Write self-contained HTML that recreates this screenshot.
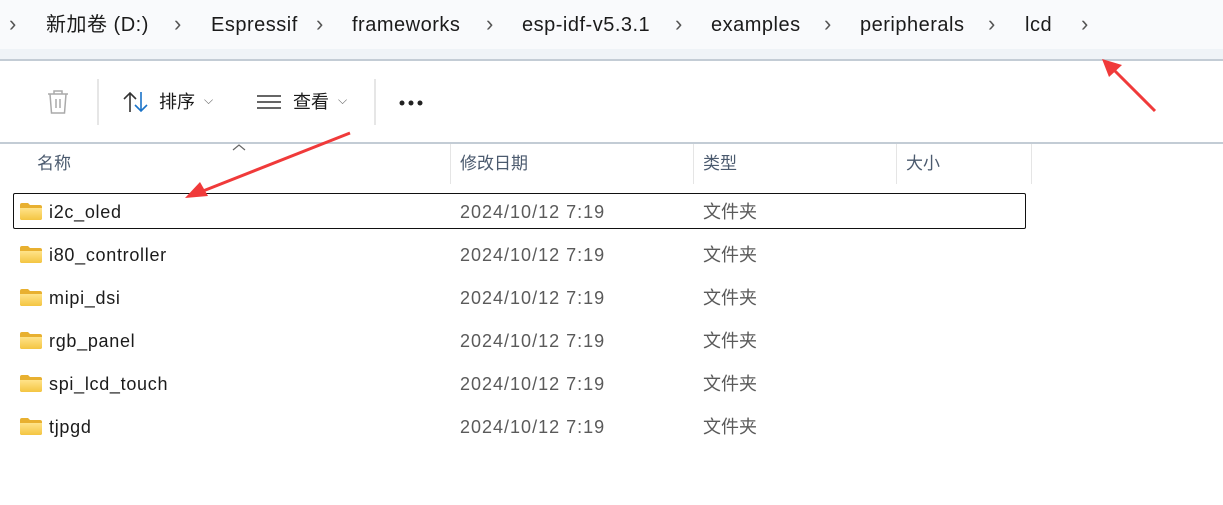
<!DOCTYPE html>
<html><head><meta charset="utf-8"><style>
*{margin:0;padding:0;box-sizing:border-box}
body{width:1223px;height:505px;background:#fff;position:relative;overflow:hidden;font-family:"Liberation Sans","Noto Sans CJK SC",sans-serif;color:#1b1b1b}
.bc{position:absolute;left:0;top:0;width:1223px;height:49px;background:#f9fafc}
.bc2{position:absolute;left:0;top:49px;width:1223px;height:11px;background:#eff3f7}
.ln{position:absolute;left:0;width:1223px;height:2px;background:#c3ccd5}
.t{position:absolute;white-space:nowrap}
.bt{font-size:20px;line-height:24px;top:13px;letter-spacing:0.5px}
.ch{font-size:22px;line-height:28px;top:10px;color:#555}
.hd{font-size:17px;line-height:20px;color:#4b5a6e;top:154px}
.row{font-size:18px;line-height:22px;letter-spacing:0.7px}
.d{color:#5a5a5a;letter-spacing:1px}
.fold{position:absolute;width:22px;height:17px}
.vs{position:absolute;top:144px;width:1px;height:40px;background:#e5e5e5}
</style></head><body>
<div class="bc"></div><div class="bc2"></div>
<div class="ln" style="top:59px"></div>
<div class="ln" style="top:142px"></div>
<span class="t ch" style="left:9px">›</span>
<span class="t bt" style="left:46px">新加卷 (D:)</span>
<span class="t ch" style="left:174px">›</span>
<span class="t bt" style="left:211px">Espressif</span>
<span class="t ch" style="left:316px">›</span>
<span class="t bt" style="left:352px">frameworks</span>
<span class="t ch" style="left:486px">›</span>
<span class="t bt" style="left:522px">esp-idf-v5.3.1</span>
<span class="t ch" style="left:675px">›</span>
<span class="t bt" style="left:711px">examples</span>
<span class="t ch" style="left:824px">›</span>
<span class="t bt" style="left:860px">peripherals</span>
<span class="t ch" style="left:988px">›</span>
<span class="t bt" style="left:1025px">lcd</span>
<span class="t ch" style="left:1081px">›</span>

<svg style="position:absolute;left:46px;top:89px" width="24" height="26" viewBox="0 0 24 26" fill="none" stroke="#aaa" stroke-width="1.5"><path d="M2 5h20M8 5V2h8v3M4 5l1.5 19h13L20 5M10 10v9M14 10v9"/></svg>
<div style="position:absolute;left:97px;top:79px;width:2px;height:46px;background:#e6e6e6"></div>
<svg style="position:absolute;left:122px;top:90px" width="28" height="24" viewBox="0 0 28 24" fill="none" stroke-width="1.6"><path d="M8 22V3M2 9l6-6 6 6" stroke="#333"/><path d="M19 2v19M13 15l6 6 6-6" stroke="#1a73c8"/></svg>
<span class="t" style="left:159px;top:91px;font-size:18px;line-height:22px">排序</span>
<span class="t" style="left:204px;top:93px;font-size:12px;color:#666">⌵</span>
<svg style="position:absolute;left:257px;top:94px" width="24" height="16" stroke="#333" stroke-width="1.5"><path d="M0 2h24M0 8h24M0 14h24"/></svg>
<span class="t" style="left:293px;top:91px;font-size:18px;line-height:22px">查看</span>
<span class="t" style="left:338px;top:93px;font-size:12px;color:#666">⌵</span>
<div style="position:absolute;left:374px;top:79px;width:2px;height:46px;background:#e6e6e6"></div>
<svg style="position:absolute;left:398px;top:99px" width="28" height="8" fill="#222"><circle cx="4" cy="4" r="2.5"/><circle cx="13" cy="4" r="2.5"/><circle cx="22" cy="4" r="2.5"/></svg>

<svg style="position:absolute;left:232px;top:143px" width="14" height="9" fill="none" stroke="#666" stroke-width="1.2"><path d="M1 7l6-5 6 5"/></svg>
<span class="t hd" style="left:37px">名称</span>
<div class="vs" style="left:450px"></div>
<span class="t hd" style="left:460px">修改日期</span>
<div class="vs" style="left:693px"></div>
<span class="t hd" style="left:703px">类型</span>
<div class="vs" style="left:896px"></div>
<span class="t hd" style="left:906px">大小</span>
<div class="vs" style="left:1031px"></div>

<div style="position:absolute;left:13px;top:193px;width:1013px;height:36px;border:1px solid #111;border-radius:2px"></div>

<svg width="0" height="0" style="position:absolute"><defs><linearGradient id="g" x1="0" y1="0" x2="0" y2="1"><stop offset="0" stop-color="#ffe38a"/><stop offset="1" stop-color="#f4c542"/></linearGradient></defs></svg>
<div id="rows"></div>
<script>
var n=["i2c_oled","i80_controller","mipi_dsi","rgb_panel","spi_lcd_touch","tjpgd"],h="";
n.forEach(function(s,i){var y=201+i*43;
h+='<svg class="fold" style="left:20px;top:'+(y+2)+'px" viewBox="0 0 22 17"><path d="M0 2q0-2 2-2h6l2 2h10q2 0 2 2v11q0 2-2 2H2q-2 0-2-2z" fill="#e8b030"/><path d="M0 5h22v10q0 2-2 2H2q-2 0-2-2z" fill="url(#g)"/></svg>';
h+='<span class="t row" style="left:49px;top:'+y+'px">'+s+'</span>';
h+='<span class="t row d" style="left:460px;top:'+y+'px">2024/10/12 7:19</span>';
h+='<span class="t row d" style="left:703px;top:'+y+'px;letter-spacing:0">文件夹</span>';});
document.getElementById('rows').innerHTML=h;
</script>

<svg style="position:absolute;left:0;top:0" width="1223" height="505">
<path d="M350 133L203 191" stroke="#f03a3a" stroke-width="3"/>
<path d="M185 198L200 182L208 196Z" fill="#f03a3a"/>
<path d="M1155 111L1112 68" stroke="#f03a3a" stroke-width="3"/>
<path d="M1102 59L1122 65L1109 77Z" fill="#f03a3a"/>
</svg>
</body></html>
